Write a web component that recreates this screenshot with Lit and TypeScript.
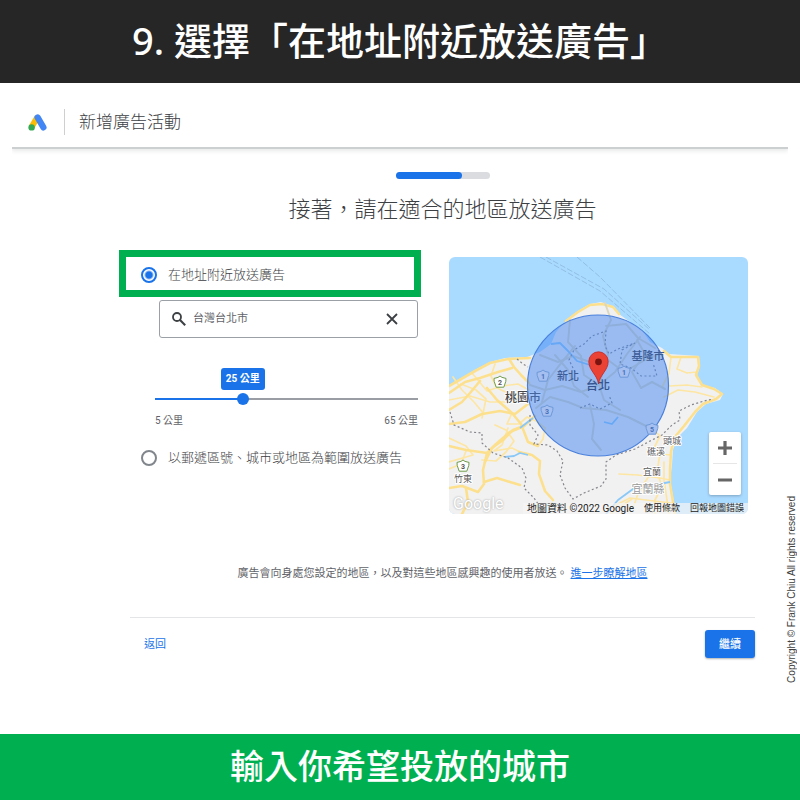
import { LitElement, html, css, svg } from "lit";
import { customElement, property, state } from "lit/decorators.js";
import { styleMap } from "lit/directives/style-map.js";

type MapLabel = { x: number; y: number; text: string; kind: string };
type Shield = { x: number; y: number; text: string; tone: string };

// Map drawing units: one unit is one pixel at the map's natural width.
const LAND =
  "M440 392 L449 386 L460 380 L475 370 L490 362 L505 358 L527 357 L540 352 L551 344 L556 332 L566 321 L578 311 L590 304 L601 302 L612 306 L619 314 L630 322 L642 330 L650 342 L662 348 L669 354 L684 355 L699 356 L700 366 L697 375 L702 385 L715 388 L723 394 L720 400 L706 404 L697 412 L687 428 L677 438 L673 450 L672 465 L670 480 L673 496 L677 520 L440 520 Z";

const WIDE_ROADS = [
  "M449 386 L475 371 L490 363 L508 359 L530 358",
  "M509 359 L514 367 L521 375 L529 383",
  "M449 393 L465 382 L480 378 L498 372 L512 368",
  "M449 424 L465 422 L482 414 L500 411 L515 414 L528 404",
  "M480 381 L470 393 L462 402 L449 410",
  "M487 388 L497 400 L512 413 L521 424 L528 442 L538 446",
  "M449 446 L466 450 L487 453 L496 444 L510 432 L524 426 L535 416",
  "M487 453 L483 470 L484 484 L478 492 L462 486 L449 488",
  "M484 482 L497 478 L510 482 L520 485",
  "M466 488 L468 502 L462 514",
  "M524 426 L513 430 L503 440 L492 448 L485 462",
  "M519 452 L532 455 L540 461 L539 474 L545 491 L553 500",
  "M566 321 L578 312 L590 305 L602 304 L613 307 L619 314",
  "M664 351 L671 357 L684 357 L698 357 L699 366 L696 375 L702 385 L714 389 L722 394 L716 399 L703 404 L695 412 L684 426 L674 438 L671 452 L670 470 L670 484 L675 514",
];

const THIN_ROADS = [
  "M449 400 L470 396 L490 402 L510 402",
  "M453 377 L462 390 L474 402 L484 414",
  "M472 373 L487 391 L502 386 L518 384 L529 390",
  "M495 364 L491 376 L497 388 L510 394 L520 401",
  "M461 384 L476 390 L486 399 L482 418",
  "M449 438 L466 446 L473 455 L449 462",
  "M466 451 L461 464 L449 469",
  "M495 425 L506 430 L514 441 L506 452 L496 461 L482 460",
  "M508 428 L502 445 L494 451 L512 448 L522 453",
  "M512 413 L507 424 L519 424 L527 417 L536 421 L545 428 L543 439 L538 446",
  "M671 357 L669 373 L662 387",
  "M681 357 L677 369 L687 373 L697 372",
  "M669 386 L687 385 L702 387",
  "M664 397 L678 390 L695 392 L714 397",
  "M671 455 L660 454 L655 446 L660 436 L653 429",
  "M619 474 L638 475 L660 478 L670 480",
  "M660 454 L657 472 L662 486 L655 500 L655 514",
  "M664 462 L664 480 L667 500 L669 514",
  "M614 506 L630 498 L646 500 L671 503",
  "M632 499 L618 508 L611 514",
  "M649 476 L639 491 L633 508",
];

const INNER_ROADS = [
  "M540 355 L558 362 L573 356 L590 362 L608 360 L624 372 L645 360 L662 353",
  "M530 385 L545 390 L562 386 L581 392 L599 385 L615 372 L627 354 L640 337",
  "M536 408 L550 397 L568 402 L583 408 L606 410 L628 417 L646 426",
  "M570 320 L568 342 L581 356 L584 375 L599 385 L604 400 L620 410",
  "M605 303 L611 320 L603 336 L608 355 L599 385",
  "M575 346 L558 367 L548 380 L542 402",
  "M590 405 L594 424 L592 439 L601 450",
  "M637 340 L645 354 L632 372 L641 388 L652 382 L665 389",
  "M555 355 L568 370 L574 386 L588 397",
  "M606 326 L626 324 L638 338 L655 348",
];

const BORDERS = [
  "M450 412 L454 425 L470 432 L482 433 L482 443 L493 453 L508 458 L522 468 L526 478 L524 488 L534 498 L541 508",
  "M517 359 L523 364 L528 367",
  "M530 415 L530 425 L538 435 L534 444 L548 445 L557 451 L563 461 L560 475 L565 488 L573 499 L584 493 L601 486 L606 479 L606 462 L616 455 L635 449 L652 440 L662 435 L672 425 L680 420 L679 411 L691 405 L704 401 L713 399",
  "M575 372 L569 360 L574 350 L584 344 L592 336 L606 331 L605 346 L609 354 L618 349 L635 343 L622 350 L620 364 L631 368 L641 376 L657 376 L653 363",
  "M580 408 L590 404 L600 409 L612 403 L609 395",
];

const LABELS: MapLabel[] = [
  { x: 523, y: 402, text: "桃園市", kind: "city" },
  { x: 568, y: 380, text: "新北", kind: "inner" },
  { x: 598, y: 390, text: "台北", kind: "capital" },
  { x: 648, y: 360, text: "基隆市", kind: "inner" },
  { x: 672, y: 444, text: "頭城", kind: "town" },
  { x: 656, y: 455, text: "礁溪", kind: "town" },
  { x: 652, y: 475, text: "宜蘭", kind: "town" },
  { x: 648, y: 493, text: "宜蘭縣", kind: "county" },
  { x: 463, y: 482, text: "竹東", kind: "town" },
];

const SHIELDS: Shield[] = [
  { x: 500, y: 382, text: "2", tone: "green" },
  { x: 463, y: 466, text: "3", tone: "green" },
  { x: 543, y: 376, text: "1", tone: "blue" },
  { x: 547, y: 411, text: "3", tone: "blue" },
  { x: 624, y: 372, text: "1", tone: "blue" },
  { x: 652, y: 429, text: "5", tone: "blue" },
];

const FONT = css`Roboto, "Noto Sans CJK TC", sans-serif`;

@customElement("area-map")
export class AreaMap extends LitElement {
  static styles = css`
    :host {
      display: block;
      position: relative;
      height: 257px;
      border-radius: 6px;
      overflow: hidden;
      background: #a9daff;
      font-family: ${FONT};
    }
    .canvas { display: block; width: 100%; height: 100%; }
    .land { fill: #f1f1f1; }
    .wide, .thin, .inner-road { fill: none; stroke-linejoin: round; stroke-linecap: round; }
    .wide { stroke: #fde08e; stroke-width: 2.6; }
    .thin { stroke: #fde6a4; stroke-width: 1.7; }
    .inner-road { stroke: #dcd8c0; stroke-width: 2; }
    .border { fill: none; stroke: #85858c; stroke-width: 1.2; stroke-dasharray: 2 2.4; }
    .ferry { fill: none; stroke: #8fbcdf; stroke-width: 0.9; stroke-dasharray: 6 2; }
    .river { fill: none; stroke: #8ac8f8; stroke-width: 1.8; stroke-linejoin: round; }
    .radius { fill: #4285f4; fill-opacity: 0.5; stroke: #4a80dc; stroke-width: 1.2; }
    .label { text-anchor: middle; paint-order: stroke; stroke-linejoin: round; }
    .city { font-size: 12px; fill: #474747; stroke: #fff; stroke-width: 2px; font-weight: 500; }
    .inner { font-size: 11px; fill: #3c5c96; font-weight: 500; }
    .capital { font-size: 12px; fill: #35548f; font-weight: 500; }
    .town { font-size: 9px; fill: #5c5c5c; stroke: #fff; stroke-width: 2px; }
    .county { font-size: 11px; fill: #999; stroke: #fff; stroke-width: 2px; }
    .badge { stroke-width: 1; stroke-linejoin: round; }
    .badge.green { fill: #fff; stroke: #6f9c4b; }
    .badge.blue { fill: #a4bff0; stroke: #6e99d8; }
    .badge-text { font-size: 7px; font-weight: 700; text-anchor: middle; }
    .badge-text.green { fill: #555; }
    .badge-text.blue { fill: #4872bb; }
    .pin { fill: #ea4335; stroke: #c5221f; stroke-width: 0.8; }
    .pin-dot { fill: #7b1310; }
    .brand {
      position: absolute;
      left: 4px;
      bottom: 0;
      font-size: 16px;
      line-height: 20px;
      color: #fff;
      text-shadow: 0 0 2px #999;
    }
    .credits {
      position: absolute;
      right: 0;
      bottom: 0;
      display: flex;
      align-items: center;
      gap: 10px;
      height: 11px;
      padding: 0 4px;
      background: rgba(245, 245, 245, 0.7);
      font-size: 9px;
      line-height: 11px;
      white-space: nowrap;
      color: #222;
    }
    .credits a { color: inherit; text-decoration: none; }
    .data { font-size: 10px; }
    .zoom {
      position: absolute;
      right: 7px;
      bottom: 19px;
      display: flex;
      flex-direction: column;
      width: 32px;
      background: #fff;
      border-radius: 2px;
      box-shadow: 0 1px 3px rgba(0, 0, 0, 0.25);
    }
    .zoom-button {
      display: grid;
      place-items: center;
      height: 31px;
      padding: 0;
      border: 0;
      background: none;
    }
    .rule { height: 1px; margin: 0 4px; background: #e6e6e6; }
    .zoom-icon { width: 14px; height: 14px; fill: #666; }
  `;

  render() {
    return html`
      <svg class="canvas" viewBox="449 257 299 257" preserveAspectRatio="xMidYMid slice" role="img" aria-label="台北地圖">
        <path class="ferry" d="M540 257 L600 291 L650 334" />
        <path class="ferry" d="M546 257 L604 289 L650 330" />
        <path class="ferry" d="M577 257 L600 277 L650 328" />
        <path class="land" d=${LAND} />
        ${THIN_ROADS.map((d) => svg`<path class="thin" d=${d} />`)}
        ${WIDE_ROADS.map((d) => svg`<path class="wide" d=${d} />`)}
        ${INNER_ROADS.map((d) => svg`<path class="inner-road" d=${d} />`)}
        <path class="river" d="M551 344 L560 343 L568 351 L577 361 L590 365 L600 362" />
        <path class="river" d="M505 457 L514 456 L520 453 L528 455 M520 428 L533 418 M604 422 L612 424 L618 417" />
        <path class="river" d="M606 514 L618 500 L633 489 L670 482" />
        ${BORDERS.map((d) => svg`<path class="border" d=${d} />`)}
        ${LABELS.filter((l) => l.kind === "city").map((l) => this.label(l))}
        <circle class="radius" cx="598" cy="385.5" r="70.5" />
        ${SHIELDS.map((s) => this.shield(s))}
        ${LABELS.filter((l) => l.kind !== "city").map((l) => this.label(l))}
        <path class="pin" d="M598.5 384 C597.5 375 588.8 370.5 588.8 361.5 A9.7 9.7 0 0 1 608.2 361.5 C608.2 370.5 599.5 375 598.5 384 Z" />
        <circle class="pin-dot" cx="598.5" cy="361.8" r="3.4" />
      </svg>
      <span class="brand">Google</span>
      <div class="credits">
        <span class="data">地圖資料 ©2022 Google</span>
        <a href="#terms">使用條款</a>
        <a href="#report">回報地圖錯誤</a>
      </div>
      <div class="zoom">
        <button class="zoom-button" type="button" aria-label="放大">
          <svg class="zoom-icon" viewBox="0 0 14 14"><path d="M5.4 0h3.2v5.4H14v3.2H8.6V14H5.4V8.6H0V5.4h5.4z" /></svg>
        </button>
        <span class="rule"></span>
        <button class="zoom-button" type="button" aria-label="縮小">
          <svg class="zoom-icon" viewBox="0 0 14 14"><path d="M0 5.4h14v3.2H0z" /></svg>
        </button>
      </div>
    `;
  }

  private label(l: MapLabel) {
    return svg`<text class="label ${l.kind}" x=${l.x} y=${l.y}>${l.text}</text>`;
  }

  private shield(s: Shield) {
    return svg`<g transform="translate(${s.x} ${s.y})">
      <path class="badge ${s.tone}" d="M0 -6 L2 -4.6 L6 -3.6 L5.8 -0.6 L3.8 5.2 L-3.8 5.2 L-5.8 -0.6 L-6 -3.6 L-2 -4.6 Z" />
      <text class="badge-text ${s.tone}" y="3">${s.text}</text>
    </g>`;
  }
}

@customElement("radius-slider")
export class RadiusSlider extends LitElement {
  @property({ type: Number }) min = 5;
  @property({ type: Number }) max = 65;
  @property({ type: Number }) value = 25;

  static styles = css`
    :host { display: block; font-family: ${FONT}; font-size: 10px; line-height: 14px; color: #5f6368; }
    .rail { position: relative; display: flex; align-items: center; height: 14px; }
    .line, .fill { position: absolute; left: 0; height: 2px; }
    .line { right: 0; background: #9a9da3; }
    .fill { background: #1a73e8; }
    .range {
      position: relative;
      flex: 1;
      min-width: 0;
      height: 14px;
      margin: 0 -6px;
      background: none;
      appearance: none;
    }
    .range::-webkit-slider-thumb {
      appearance: none;
      width: 12px;
      height: 12px;
      border-radius: 50%;
      background: #1a73e8;
    }
    .bubble {
      position: absolute;
      bottom: 16px;
      padding: 4px 5px;
      border-radius: 3px;
      background: #1a73e8;
      color: #fff;
      font-weight: 700;
      white-space: nowrap;
      transform: translateX(-50%);
    }
    .ends { display: flex; justify-content: space-between; margin-top: 8px; }
  `;

  render() {
    const share = `${((this.value - this.min) / (this.max - this.min)) * 100}%`;
    return html`
      <div class="rail">
        <span class="line"></span>
        <span class="fill" style=${styleMap({ width: share })}></span>
        <input class="range" type="range" aria-label="半徑" .min=${String(this.min)} .max=${String(this.max)}
          .value=${String(this.value)} @input=${this.onInput} />
        <output class="bubble" style=${styleMap({ left: share })}>${this.value} 公里</output>
      </div>
      <div class="ends"><span>${this.min} 公里</span><span>${this.max} 公里</span></div>
    `;
  }

  private onInput(e: Event) {
    this.value = Number((e.target as HTMLInputElement).value);
  }
}

@customElement("app-root")
export class AppRoot extends LitElement {
  @state() private query = "台灣台北市";

  static styles = css`
    :host {
      display: flex;
      flex-direction: column;
      min-height: 100vh;
      background: #fff;
      color: #3c4043;
      font-family: ${FONT};
      font-size: 11px;
      line-height: 16px;
    }
    h1, h2, p { margin: 0; }
    .banner, .caption {
      color: #fff;
      font-family: "Noto Sans", "Noto Sans CJK TC", sans-serif;
      font-weight: 500;
      text-align: center;
    }
    .banner { padding: 16px 0 18px; background: #262626; font-size: 38px; line-height: 49px; }
    .caption { padding: 8px 0 10px; background: #00b050; font-size: 34px; line-height: 48px; }
    .page { position: relative; flex: 1; padding: 0 12px; }
    .bar {
      display: flex;
      align-items: center;
      height: 66px;
      padding: 14px 16px 0;
      box-sizing: border-box;
      border-bottom: 2px solid #cdd0d1;
      box-shadow: 0 2px 4px rgba(60, 64, 67, 0.12);
      clip-path: inset(0 0 -8px 0);
    }
    .logo { width: 19px; height: 17px; }
    .split { width: 1px; height: 26px; margin: 0 14px 0 17px; background: #cfcfcf; }
    .bar-title { font-size: 17px; line-height: 24px; font-weight: 300; }
    .content { padding: 23px 33px 0 107px; }
    .progress { width: 94px; height: 7px; margin-left: calc(50% - 41px); border-radius: 4px; background: #dadce0; }
    .progress-fill { height: 100%; border-radius: 4px; background: #1a73e8; }
    .heading { padding: 15px 0 0 11px; font-size: 22px; line-height: 32px; font-weight: 300; text-align: center; }
    .columns {
      display: grid;
      grid-template-columns: minmax(0, 302fr) minmax(0, 299fr);
      gap: 28px;
      padding: 24px 7px 0 0;
    }
    .map { margin-top: 7px; }
    .option {
      display: flex;
      align-items: center;
      gap: 11px;
      padding: 0 22px;
      font-size: 13px;
      line-height: 18px;
      font-weight: 300;
      white-space: nowrap;
    }
    .picked { height: 47px; box-sizing: border-box; padding: 3px 15px 0; border: 7px solid #00b050; }
    .radio {
      appearance: none;
      flex: none;
      width: 16px;
      height: 16px;
      margin: 0;
      border: 2px solid #80868b;
      border-radius: 50%;
    }
    .radio:checked { border-color: #1a73e8; background: radial-gradient(circle, #1a73e8 3px, #fff 5px); }
    .search {
      display: flex;
      align-items: center;
      height: 38px;
      box-sizing: border-box;
      margin: 3px 3px 0 40px;
      padding: 0 19px 0 12px;
      border: 1px solid #9aa0a6;
      border-radius: 3px;
    }
    .glass { flex: none; width: 14px; height: 14px; margin-right: 7px; }
    .query {
      flex: 1;
      min-width: 0;
      padding: 0;
      border: 0;
      outline: 0;
      background: none;
      color: #5f6368;
      font: inherit;
    }
    .clear { display: grid; flex: none; padding: 0; border: 0; background: none; }
    .cross { width: 12px; height: 12px; }
    .slider { margin: 54px 3px 0 36px; }
    .other { padding-top: 21px; }
    .note { padding: 52px 0 0 11px; text-align: center; color: #5f6368; }
    .link { color: #1a73e8; margin-left: 3px; }
    .actions {
      display: flex;
      justify-content: space-between;
      align-items: center;
      margin: 35px 0 0 11px;
      padding: 12px 0 0;
      border-top: 1px solid #e4e5e7;
    }
    .back, .next { font: inherit; border: 0; background: none; }
    .back { padding: 7px 14px 5px; color: #1a73e8; }
    .next {
      padding: 7px 14px 5px;
      border-radius: 3px;
      background: #1a73e8;
      color: #fff;
      font-weight: 500;
      box-shadow: 0 1px 2px rgba(60, 64, 67, 0.4);
    }
    .rights {
      position: absolute;
      right: 2px;
      bottom: 51px;
      writing-mode: vertical-rl;
      text-orientation: sideways;
      transform: rotate(180deg);
      font-family: "Liberation Sans", sans-serif;
      font-size: 10px;
      line-height: 12px;
      color: #404040;
      white-space: nowrap;
    }
  `;

  render() {
    return html`
      <h1 class="banner">9. 選擇「在地址附近放送廣告」</h1>
      <main class="page">
        <header class="bar">
          <svg class="logo" viewBox="0 0 19 17" aria-hidden="true">
            <path d="M9.2 3.4 L3.6 13" stroke="#fbbc04" stroke-width="6" />
            <path d="M9.6 3.4 L15.4 13.4" stroke="#4285f4" stroke-width="6.2" stroke-linecap="round" />
            <circle cx="3.6" cy="13.4" r="3.2" fill="#34a853" />
          </svg>
          <span class="split"></span>
          <span class="bar-title">新增廣告活動</span>
        </header>
        <form class="content" @submit=${(e: Event) => e.preventDefault()}>
          <div class="progress" role="progressbar" aria-valuenow="70">
            <div class="progress-fill" style=${styleMap({ width: "70%" })}></div>
          </div>
          <h2 class="heading">接著，請在適合的地區放送廣告</h2>
          <div class="columns">
            <div>
              <label class="option picked">
                <input class="radio" type="radio" name="area" checked />
                <span>在地址附近放送廣告</span>
              </label>
              <div class="search">
                <svg class="glass" viewBox="0 0 14 14" fill="none" stroke="#3c4043" aria-hidden="true">
                  <circle cx="5" cy="5" r="4" stroke-width="1.8" />
                  <path d="M8 8 L13.2 13.2" stroke-width="2.1" />
                </svg>
                <input class="query" type="text" aria-label="地址" .value=${this.query}
                  @input=${(e: Event) => (this.query = (e.target as HTMLInputElement).value)} />
                <button class="clear" type="button" aria-label="清除" @click=${() => (this.query = "")}>
                  <svg class="cross" viewBox="0 0 12 12" fill="none" stroke="#3c4043" stroke-width="1.8">
                    <path d="M1 1 L11 11 M11 1 L1 11" />
                  </svg>
                </button>
              </div>
              <radius-slider class="slider"></radius-slider>
              <label class="option other">
                <input class="radio" type="radio" name="area" />
                <span>以郵遞區號、城市或地區為範圍放送廣告</span>
              </label>
            </div>
            <area-map class="map"></area-map>
          </div>
          <p class="note">
            廣告會向身處您設定的地區，以及對這些地區感興趣的使用者放送。<a class="link" href="#areas">進一步瞭解地區</a>
          </p>
          <div class="actions">
            <button class="back" type="button">返回</button>
            <button class="next" type="submit">繼續</button>
          </div>
        </form>
        <small class="rights">Copyright © Frank Chiu All rights reserved</small>
      </main>
      <footer class="caption">輸入你希望投放的城市</footer>
    `;
  }
}
